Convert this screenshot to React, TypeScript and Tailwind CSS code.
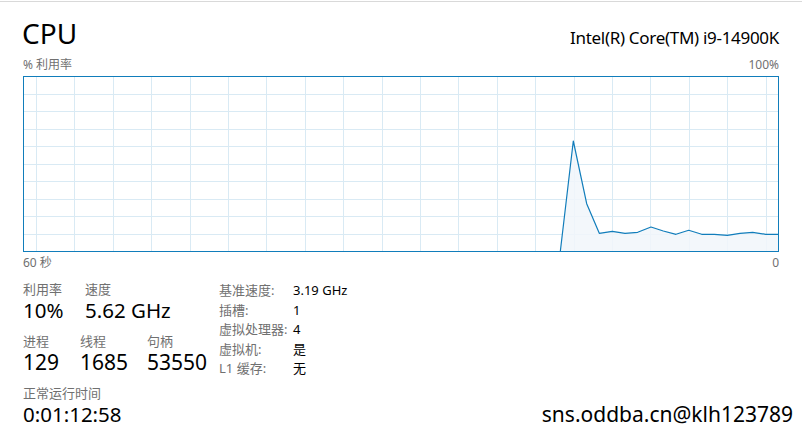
import React from 'react';

// points of the usage line, in graph pixels (0..756 x 0..176)
const usage: [number, number][] = [
  [537.3, 175.5], [550.3, 65], [563.7, 127.7], [576.3, 157.3], [589.3, 155.3],
  [602, 157.3], [614.7, 156.3], [628, 151], [640.3, 155], [653, 158.3],
  [665.7, 154.3], [678.7, 158.3], [691.3, 158.3], [704.3, 159.3], [717, 157.3],
  [729.7, 156.3], [742.7, 158.3], [755, 158.3],
];

const UsageGraph: React.FC = () => {
  const W = 756;
  const H = 176;
  const vLines = Array.from({ length: 20 }, (_, k) => Math.round(13 + 38.4 * k) + 0.5);
  const hLines = Array.from({ length: 9 }, (_, k) => Math.round(17.5 * (k + 1)) + 0.5);
  const line = usage.map(([x, y]) => `${x},${y}`).join(' ');
  const area = `${usage[0][0]},${H} ${line} ${W - 1},${H}`;

  return (
    <svg width={W} height={H} viewBox={`0 0 ${W} ${H}`} className="block">
      {vLines.map(x => (
        <line key={'v' + x} x1={x} y1={0} x2={x} y2={H} stroke="#d9eaf4" strokeWidth={1} />
      ))}
      {hLines.map(y => (
        <line key={'h' + y} x1={0} y1={y} x2={W} y2={y} stroke="#d9eaf4" strokeWidth={1} />
      ))}
      <polygon points={area} fill="#f1f6fa" fillOpacity={0.85} />
      <polyline points={line} fill="none" stroke="#117dbb" strokeWidth={1.2} strokeLinejoin="round" />
      <rect x={0.5} y={0.5} width={W - 1} height={H - 1} fill="none" stroke="#117dbb" strokeWidth={1} />
    </svg>
  );
};

const Stat: React.FC<{ label: string; value: string; width: string; big?: boolean }> = ({ label, value, width, big }) => (
  <div className={width}>
    <div className="text-[13px] leading-[14px] text-[#707070]">{label}</div>
    <div className={big ? 'text-[21px] leading-[28px] text-black' : 'text-[20.5px] leading-[28px] text-black'}>{value}</div>
  </div>
);

const specs: [string, string][] = [
  ['基准速度:', '3.19 GHz'],
  ['插槽:', '1'],
  ['虚拟处理器:', '4'],
  ['虚拟机:', '是'],
  ['L1 缓存:', '无'],
];

export default function App() {
  return (
    <div
      className="w-[802px] h-[435px] bg-white overflow-hidden text-black"
      style={{ fontFamily: '"Noto Sans", "Noto Sans CJK SC", sans-serif' }}
    >
      <div className="h-px bg-white" />
      <div className="h-px bg-[#d9d9d9]" />

      <div className="px-[23px]">
        <div className="flex justify-between items-baseline pt-[15px]">
          <div className="text-[28px] leading-[32px] -ml-[1px]">CPU</div>
          <div className="text-[17px] leading-[24px] tracking-[-0.3px]">Intel(R) Core(TM) i9-14900K</div>
        </div>

        <div className="flex justify-between mt-[7px] text-[12px] leading-[16px] text-[#707070]">
          <span>% 利用率</span>
          <span>100%</span>
        </div>

        <div className="mt-[3px]">
          <UsageGraph />
        </div>

        <div className="flex justify-between mt-[3px] text-[12px] leading-[16px] text-[#707070]">
          <span>60 秒</span>
          <span>0</span>
        </div>

        <div className="flex mt-[11px]">
          <div className="w-[196px] shrink-0">
            <div className="flex">
              <Stat width="w-[62px]" label="利用率" value="10%" />
              <Stat width="w-auto" label="速度" value="5.62 GHz" />
            </div>
            <div className="flex mt-[10px]">
              <Stat width="w-[57px]" label="进程" value="129" big />
              <Stat width="w-[67px]" label="线程" value="1685" big />
              <Stat width="w-auto" label="句柄" value="53550" big />
            </div>
            <div className="mt-[10px]">
              <Stat width="w-auto" label="正常运行时间" value="0:01:12:58" />
            </div>
          </div>

          <div className="grid grid-cols-[74px_auto] content-start -mt-[1px] text-[13px] leading-[19.5px]">
            {specs.map(([k, v]) => (
              <React.Fragment key={k}>
                <span className="text-[#707070]">{k}</span>
                <span className="text-black">{v}</span>
              </React.Fragment>
            ))}
          </div>

          <div className="ml-auto self-end -mr-[14px] mb-[2px] text-[21px] leading-[24px] text-black">
            sns.oddba.cn@klh123789
          </div>
        </div>
      </div>
    </div>
  );
}
